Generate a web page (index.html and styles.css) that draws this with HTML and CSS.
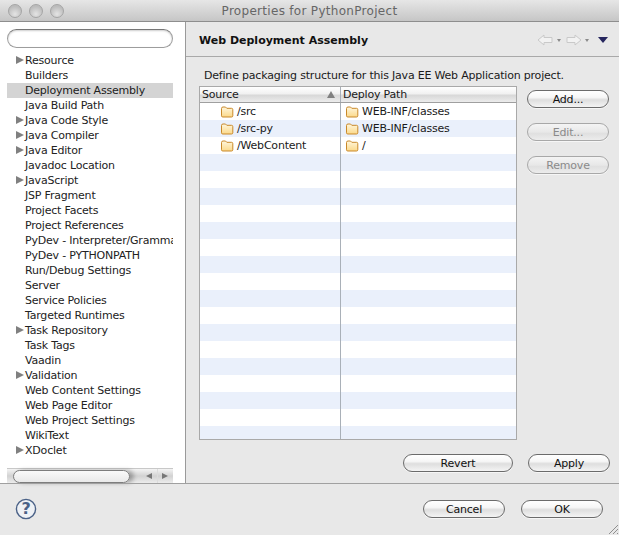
FILE: index.html
```html
<!DOCTYPE html>
<html lang="en">
<head>
<meta charset="utf-8">
<title>Properties for PythonProject</title>
<link rel="stylesheet" href="styles.css">
</head>
<body>
<svg class="defs" width="0" height="0" aria-hidden="true">
  <defs>
    <linearGradient id="fold" x1="0" y1="0" x2="0" y2="1">
      <stop offset="0" stop-color="#fff6dc"/>
      <stop offset="1" stop-color="#fbd98a"/>
    </linearGradient>
    <symbol id="folder" viewBox="0 0 14 12">
      <path d="M1.5 2.5 Q1.5 1 3 1 H5.5 L6.8 2.3 H11.5 Q12.8 2.3 12.8 3.6 V9.8 Q12.8 11 11.5 11 H2.8 Q1.5 11 1.5 9.8 Z" fill="url(#fold)" stroke="#c9892a" stroke-width="1"/>
    </symbol>
  </defs>
</svg>
<div class="window">
  <header class="titlebar">
    <div class="lights"><span class="light"></span><span class="light"></span><span class="light"></span></div>
    <div class="title">Properties for PythonProject</div>
  </header>
  <div class="main">
    <aside class="sidebar">
      <div class="search"></div>
      <ul class="tree">
        <li class="node parent">Resource</li>
        <li class="node">Builders</li>
        <li class="node selected">Deployment Assembly</li>
        <li class="node">Java Build Path</li>
        <li class="node parent">Java Code Style</li>
        <li class="node parent">Java Compiler</li>
        <li class="node parent">Java Editor</li>
        <li class="node">Javadoc Location</li>
        <li class="node parent">JavaScript</li>
        <li class="node">JSP Fragment</li>
        <li class="node">Project Facets</li>
        <li class="node">Project References</li>
        <li class="node">PyDev - Interpreter/Grammar</li>
        <li class="node">PyDev - PYTHONPATH</li>
        <li class="node">Run/Debug Settings</li>
        <li class="node">Server</li>
        <li class="node">Service Policies</li>
        <li class="node">Targeted Runtimes</li>
        <li class="node parent">Task Repository</li>
        <li class="node">Task Tags</li>
        <li class="node">Vaadin</li>
        <li class="node parent">Validation</li>
        <li class="node">Web Content Settings</li>
        <li class="node">Web Page Editor</li>
        <li class="node">Web Project Settings</li>
        <li class="node">WikiText</li>
        <li class="node parent">XDoclet</li>
      </ul>
      <div class="hscroll">
        <div class="thumb"></div>
        <div class="sarrow"><span class="tri-left"></span></div>
        <div class="sarrow"><span class="tri-right"></span></div>
      </div>
    </aside>
    <section class="content">
      <div class="pagehead">
        <h1 class="pagetitle">Web Deployment Assembly</h1>
        <div class="navicons">
          <svg width="17" height="12" viewBox="0 0 17 12"><path d="M1 6 L7 1 V3.5 H15 V8.5 H7 V11 Z" fill="#f2f2f2" stroke="#c9c9c9"/></svg>
          <span class="mini"></span>
          <svg class="nav-gap" width="17" height="12" viewBox="0 0 17 12"><path d="M16 6 L10 1 V3.5 H2 V8.5 H10 V11 Z" fill="#f2f2f2" stroke="#c9c9c9"/></svg>
          <span class="mini"></span>
          <span class="menu-tri"></span>
        </div>
      </div>
      <div class="pagebody">
        <p class="desc">Define packaging structure for this Java EE Web Application project.</p>
        <div class="tablerow">
          <div class="table">
            <div class="thead">
              <div class="th c1">Source<span class="sort"></span></div>
              <div class="th c2">Deploy Path</div>
            </div>
            <div class="tbody">
              <div class="tr">
                <div class="td c1 src"><svg class="ficon"><use href="#folder"/></svg>/src</div>
                <div class="td c2"><svg class="ficon"><use href="#folder"/></svg>WEB-INF/classes</div>
              </div>
              <div class="tr">
                <div class="td c1 src"><svg class="ficon"><use href="#folder"/></svg>/src-py</div>
                <div class="td c2"><svg class="ficon"><use href="#folder"/></svg>WEB-INF/classes</div>
              </div>
              <div class="tr">
                <div class="td c1 src"><svg class="ficon"><use href="#folder"/></svg>/WebContent</div>
                <div class="td c2"><svg class="ficon"><use href="#folder"/></svg>/</div>
              </div>
              <div class="tr"><div class="td c1"></div><div class="td c2"></div></div>
              <div class="tr"><div class="td c1"></div><div class="td c2"></div></div>
              <div class="tr"><div class="td c1"></div><div class="td c2"></div></div>
              <div class="tr"><div class="td c1"></div><div class="td c2"></div></div>
              <div class="tr"><div class="td c1"></div><div class="td c2"></div></div>
              <div class="tr"><div class="td c1"></div><div class="td c2"></div></div>
              <div class="tr"><div class="td c1"></div><div class="td c2"></div></div>
              <div class="tr"><div class="td c1"></div><div class="td c2"></div></div>
              <div class="tr"><div class="td c1"></div><div class="td c2"></div></div>
              <div class="tr"><div class="td c1"></div><div class="td c2"></div></div>
              <div class="tr"><div class="td c1"></div><div class="td c2"></div></div>
              <div class="tr"><div class="td c1"></div><div class="td c2"></div></div>
              <div class="tr"><div class="td c1"></div><div class="td c2"></div></div>
              <div class="tr"><div class="td c1"></div><div class="td c2"></div></div>
              <div class="tr"><div class="td c1"></div><div class="td c2"></div></div>
              <div class="tr"><div class="td c1"></div><div class="td c2"></div></div>
              <div class="tr"><div class="td c1"></div><div class="td c2"></div></div>
            </div>
          </div>
          <div class="sidebtns">
            <button class="btn wide">Add...</button>
            <button class="btn wide off">Edit...</button>
            <button class="btn wide off">Remove</button>
          </div>
        </div>
        <div class="applyrow">
          <button class="btn revert">Revert</button>
          <button class="btn wide">Apply</button>
        </div>
      </div>
    </section>
  </div>
  <footer class="footer">
    <svg class="help" width="22" height="22" viewBox="0 0 22 22"><circle cx="11" cy="11" r="9.6" fill="#eef1f5" stroke="#4a6187" stroke-width="1.4"/><text x="11" y="16" text-anchor="middle" class="helpq">?</text></svg>
    <div class="footbtns">
      <button class="btn wide">Cancel</button>
      <button class="btn wide">OK</button>
    </div>
    <svg class="grip" width="12" height="12" viewBox="0 0 12 12"><path d="M2 11 L11 2 M6 11 L11 6 M10 11 L11 10" stroke="#8f8f8f" fill="none"/></svg>
  </footer>
</div>
</body>
</html>
```

FILE: styles.css
```css
* { box-sizing: border-box; }
html, body { margin: 0; padding: 0; }
body {
  width: 619px;
  height: 535px;
  overflow: hidden;
  background: #e8e8e8;
  font-family: "DejaVu Sans", sans-serif;
  font-size: 11px;
  letter-spacing: -0.2px;
  color: #1a1a1a;
}
.defs { position: absolute; }
.window { display: flex; flex-direction: column; height: 535px; }

.titlebar {
  height: 22px;
  flex: none;
  display: flex;
  align-items: center;
  background: linear-gradient(#e6e6e6, #c6c6c6);
  border-bottom: 1px solid #8e8e8e;
}
.lights { display: flex; gap: 7px; padding-left: 8px; }
.light {
  width: 14px;
  height: 14px;
  border-radius: 50%;
  border: 1px solid #a5a5a5;
  background: radial-gradient(circle at 50% 75%, #e4e4e4, #bcbcbc 70%);
}
.title {
  flex: 1;
  text-align: center;
  padding-top: 1px;
  font-size: 12px;
  letter-spacing: 0.3px;
  color: #666;
  margin-left: -64px;
}

.main { flex: 1; display: flex; min-height: 0; }
.sidebar {
  width: 186px;
  flex: none;
  background: #fff;
  border-right: 1px solid #9a9a9a;
  padding: 7px 12px 0 7px;
  display: flex;
  flex-direction: column;
}
.search {
  height: 19px;
  flex: none;
  border: 1px solid #9d9d9d;
  border-top-color: #777;
  border-radius: 10px;
  box-shadow: inset 0 1px 2px rgba(0,0,0,.2);
  background: #fff;
}
.tree {
  list-style: none;
  margin: 5px 0 0;
  padding: 0;
  flex: 1;
  overflow: hidden;
}
.node {
  height: 15px;
  line-height: 15px;
  padding-left: 18px;
  white-space: nowrap;
  overflow: hidden;
  position: relative;
  color: #222;
}
.node.selected { background: #d4d4d4; }
.node.parent::before {
  content: "";
  position: absolute;
  left: 9px;
  top: 3px;
  border-left: 8px solid #808080;
  border-top: 4.5px solid transparent;
  border-bottom: 4.5px solid transparent;
}
.hscroll {
  height: 15px;
  flex: none;
  display: flex;
  align-items: center;
  background: linear-gradient(#f4f4f4, #d2d2d2 50%, #ececec);
  border-top: 1px solid #c8c8c8;
}
.thumb {
  width: 117px;
  height: 13px;
  margin: 0 11px 0 6px;
  border: 1px solid #7d7d7d;
  border-radius: 7px;
  background: linear-gradient(#fafafa, #e9e9e9);
  box-shadow: 4px 0 4px rgba(0,0,0,.28);
  flex: none;
}
.sarrow {
  flex: 1;
  height: 14px;
  display: flex;
  align-items: center;
  justify-content: center;
}
.sarrow + .sarrow { border-left: 1px solid #dcdcdc; }
.tri-left { border-right: 6px solid #777; border-top: 3.5px solid transparent; border-bottom: 3.5px solid transparent; }
.tri-right { border-left: 6px solid #777; border-top: 3.5px solid transparent; border-bottom: 3.5px solid transparent; }

.content { flex: 1; display: flex; flex-direction: column; min-width: 0; }
.pagehead {
  height: 35px;
  flex: none;
  display: flex;
  align-items: center;
  justify-content: space-between;
  padding: 2px 11px 0 13px;
  border-bottom: 1px solid #a9a9a9;
}
.pagetitle { margin: 0; font-size: 11px; letter-spacing: 0; font-weight: bold; color: #111; }
.navicons { display: flex; align-items: center; }
.nav-gap { margin-left: 4px; }
.mini {
  margin-left: 3px;
  border-top: 3px solid #8a8a8a;
  border-left: 2.5px solid transparent;
  border-right: 2.5px solid transparent;
}
.menu-tri {
  margin-left: 9px;
  border-top: 6px solid #26265e;
  border-left: 5px solid transparent;
  border-right: 5px solid transparent;
}
.pagebody { flex: 1; display: flex; flex-direction: column; padding: 0 9px 0 13px; }
.desc { margin: 12px 0 3px 5px; height: 14px; line-height: 14px; }
.tablerow { display: flex; gap: 10px; }
.table {
  width: 318px;
  flex: none;
  border: 1px solid #a9a9a9;
  background: #fff;
}
.thead {
  display: flex;
  height: 16px;
  border-bottom: 1px solid #9f9f9f;
  background: linear-gradient(#fff, #f1f1f1 45%, #d8d8d8 55%, #ececec);
}
.th { line-height: 15px; padding-left: 2px; position: relative; }
.c1 { width: 141px; flex: none; border-right: 1px solid #a9b0b8; }
.c2 { flex: 1; }
.sort {
  position: absolute;
  right: 5px;
  top: 4px;
  border-bottom: 7px solid #808080;
  border-left: 4px solid transparent;
  border-right: 4px solid transparent;
}
.tbody { display: flex; flex-direction: column; height: 336px; overflow: hidden; }
.tr { display: flex; height: 17px; flex: none; }
.tr:nth-child(even) { background: #eaf0fb; }
.td { display: flex; align-items: center; line-height: 17px; padding-left: 4px; white-space: nowrap; }
.src { padding-left: 20px; }
.ficon { width: 14px; height: 12px; margin-right: 3px; flex: none; }
.sidebtns { display: flex; flex-direction: column; gap: 15px; padding-top: 4px; }

.btn {
  height: 18px;
  padding: 0;
  border: 1px solid #6b6b6b;
  border-radius: 9px;
  background: linear-gradient(#fff, #f6f6f6 40%, #dedede 55%, #f4f4f4);
  font: inherit;
  letter-spacing: inherit;
  color: #111;
  box-shadow: 0 1px 0 rgba(255,255,255,.6);
}
.wide { width: 82px; }
.revert { width: 110px; }
.off { color: #8a8a8a; border-color: #a8a8a8; background: linear-gradient(#f4f4f4, #e8e8e8 50%, #e0e0e0 60%, #ececec); }
.applyrow { display: flex; justify-content: flex-end; gap: 15px; margin-top: 14px; }

.footer {
  flex: none;
  height: 52px;
  border-top: 1px solid #a0a0a0;
  display: flex;
  align-items: center;
  padding: 0 16px 1px 15px;
  position: relative;
}
.help { flex: none; }
.helpq { font-size: 16px; font-weight: bold; fill: #4a6187; font-family: "DejaVu Sans", sans-serif; }
.footbtns { margin-left: auto; display: flex; gap: 16px; }
.grip { position: absolute; right: 0; bottom: 0; }
```
